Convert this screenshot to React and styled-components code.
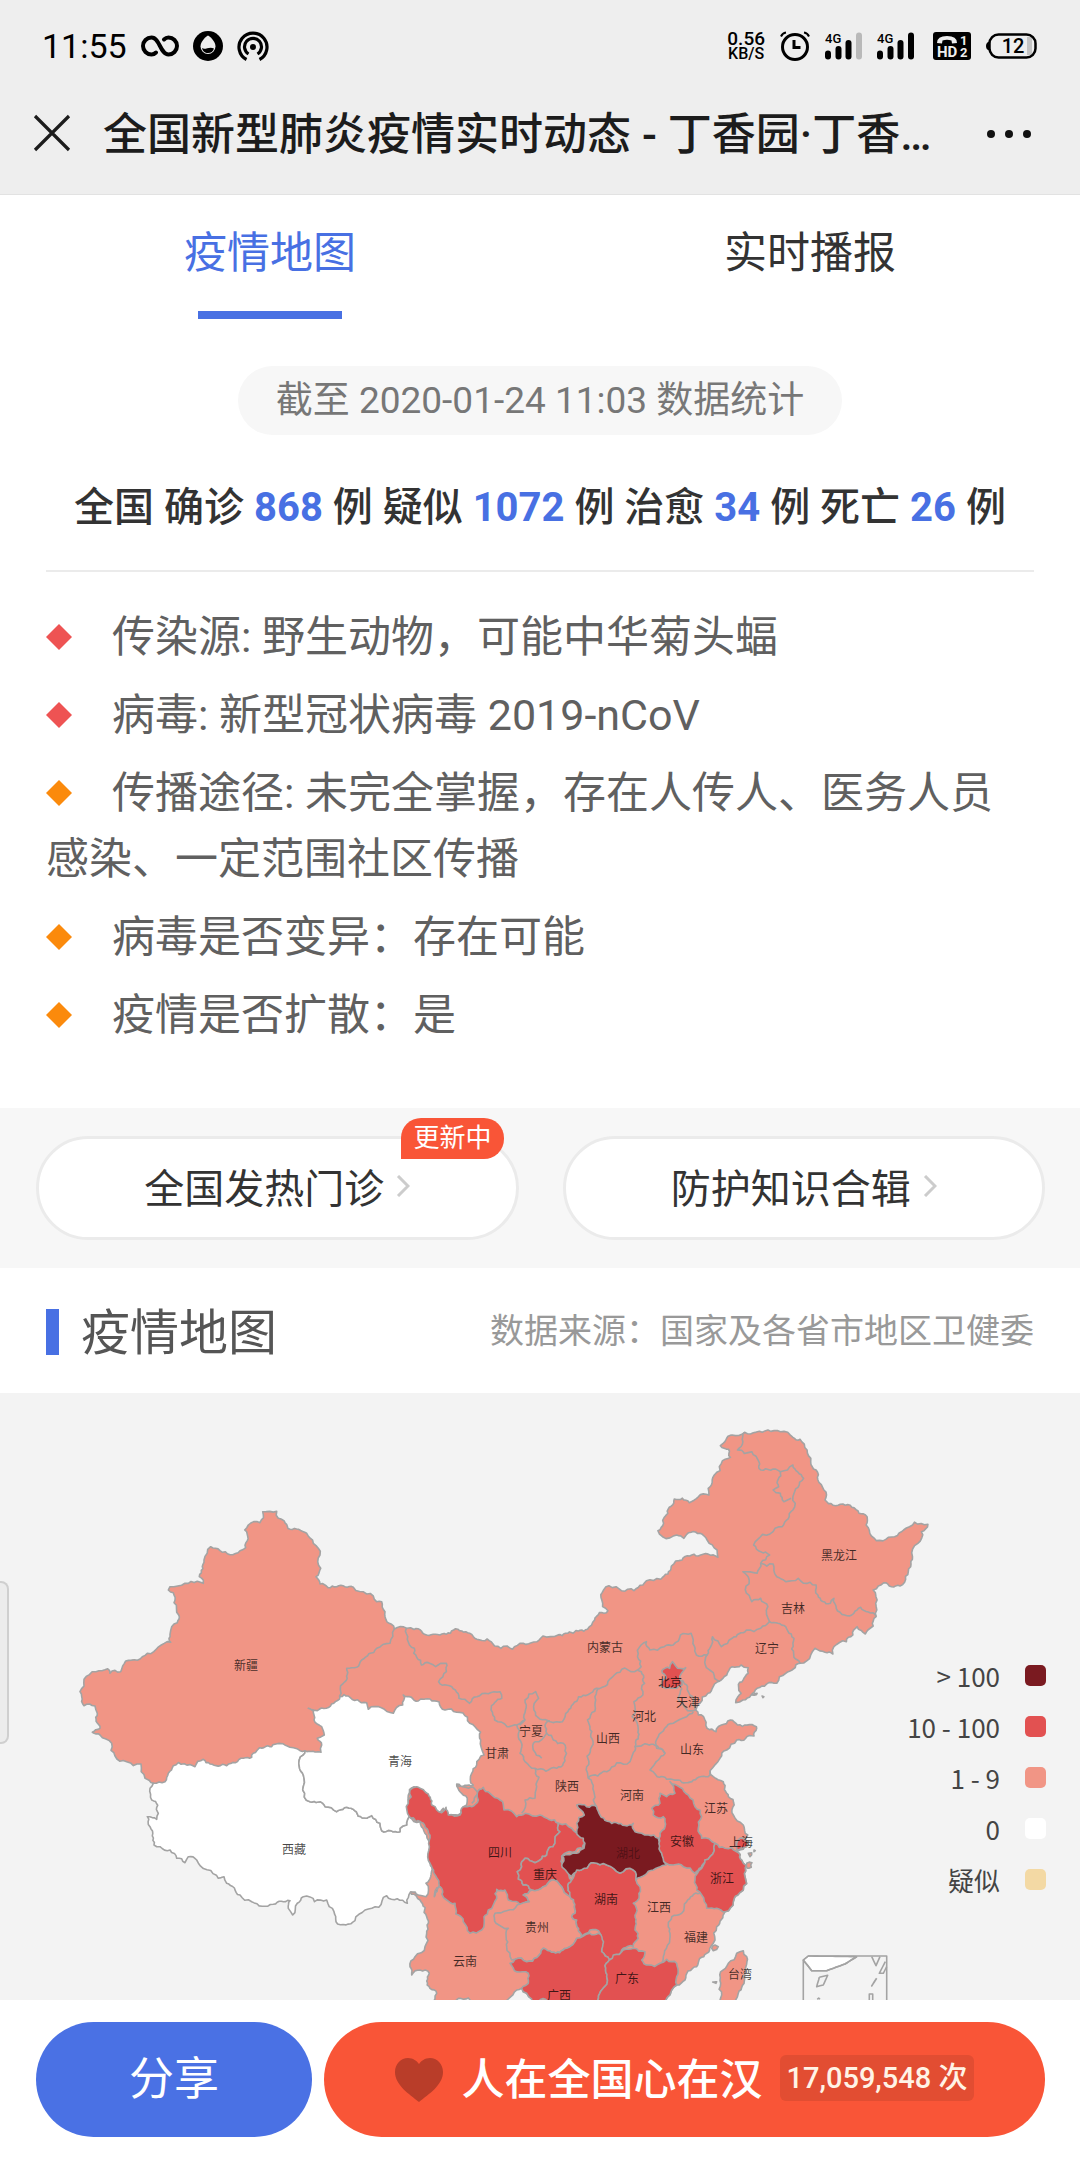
import React from "react";
import styled, { createGlobalStyle } from "styled-components";

const BLUE = "#4870e3";
const RED = "#f95537";
const SANS = `Roboto, "Noto Sans CJK SC", sans-serif`;

const GlobalStyle = createGlobalStyle`
  * { box-sizing: border-box; }
  body { margin: 0; background: #fff; font-family: ${SANS}; color: #333; }
  button { font: inherit; color: inherit; border: 0; padding: 0; background: none; cursor: pointer; }
  a { color: inherit; text-decoration: none; }
  h1, h2, p, ul { margin: 0; padding: 0; font-weight: 400; list-style: none; }
  svg { display: block; flex: none; }
`;

/* ---------- top bars ---------- */

const Page = styled.div`
  min-height: 100vh;
  display: flex;
  flex-direction: column;
`;

const Top = styled.header`
  background: #eee;
  border-bottom: 1px solid #e2e2e2;
`;

const StatusBar = styled.div`
  height: 92px;
  padding: 0 43px 0 42px;
  display: flex;
  align-items: center;
  justify-content: space-between;
  color: #000;
`;

const StatusGroup = styled.div`
  display: flex;
  align-items: center;
  gap: ${(p) => p.$gap}px;
`;

const Clock = styled.span`
  font-size: 34px;
  line-height: 40px;
`;

const Speed = styled.div`
  display: flex;
  flex-direction: column;
  align-items: center;
  font-weight: 500;
  font-size: 19px;
  line-height: 16px;
`;

const SmallUnit = styled.span`
  font-size: 16px;
  line-height: 14px;
`;

const TitleBar = styled.div`
  height: 102px;
  padding: 0 48px 20px 32px;
  display: flex;
  align-items: center;
`;

const PageTitle = styled.h1`
  flex: 1;
  margin-left: 31px;
  padding-top: 4px;
  font-size: 44px;
  line-height: 60px;
  font-weight: 500;
  color: #1c1c1c;
  white-space: nowrap;
`;

const Tabs = styled.nav`
  display: flex;
  padding-top: 28px;
`;

const Tab = styled.button`
  flex: 1;
  display: flex;
  flex-direction: column;
  align-items: center;
  gap: 28px;
  font-size: 43px;
  line-height: 60px;
  color: ${(p) => (p.$active ? BLUE : "#333")};

  &::after {
    content: "";
    width: 144px;
    height: 8px;
    background: ${(p) => (p.$active ? BLUE : "transparent")};
  }
`;

/* ---------- numbers and facts ---------- */

const Overview = styled.section`
  padding: 47px 46px 60px;
  display: flex;
  flex-direction: column;
`;

const Stamp = styled.p`
  align-self: center;
  padding: 0 38px;
  border-radius: 35px;
  background: #f7f7f7;
  color: #777;
  font-size: 37px;
  line-height: 69px;
`;

const Totals = styled.p`
  padding: 41px 0 30px;
  border-bottom: 2px solid #ebebeb;
  font-size: 40px;
  line-height: 64px;
  font-weight: 500;
  text-align: center;
  white-space: nowrap;
`;

const Count = styled.strong`
  font-weight: 700;
  color: ${BLUE};
`;

const Facts = styled.ul`
  margin-top: 32px;
  display: flex;
  flex-direction: column;
  gap: 12px;
`;

const Fact = styled.li`
  font-size: 43px;
  line-height: 66px;
  color: #606060;

  &::before {
    content: "";
    display: inline-block;
    width: 26px;
    height: 26px;
    margin-right: 40px;
    vertical-align: 2px;
    background: ${(p) => p.$color};
    clip-path: polygon(50% 0, 100% 50%, 50% 100%, 0 50%);
  }
`;

const Links = styled.nav`
  display: grid;
  grid-template-columns: 1fr 1fr;
  gap: 44px;
  padding: 28px 35px 28px 36px;
  background: #f7f7f7;
`;

const PillLink = styled.a`
  position: relative;
  display: flex;
  align-items: center;
  justify-content: center;
  gap: 12px;
  height: 104px;
  padding-bottom: 4px;
  border: 3px solid #ebebeb;
  border-radius: 52px;
  background: #fff;
  font-size: 40px;
`;

const Badge = styled.span`
  position: absolute;
  top: -21px;
  right: 12px;
  padding: 0 12px;
  border-radius: 20px 20px 20px 0;
  background: ${RED};
  color: #fff;
  font-size: 26px;
  line-height: 41px;
`;

const SectionHead = styled.div`
  display: flex;
  align-items: center;
  justify-content: space-between;
  height: 125px;
  padding: 0 46px 4px;
`;

const SectionTitle = styled.h2`
  display: flex;
  align-items: center;
  gap: 22px;
  font-size: 49px;
  color: #555;

  &::before {
    content: "";
    width: 13px;
    height: 46px;
    margin-top: 6px;
    background: ${BLUE};
  }
`;

const Source = styled.p`
  font-size: 34px;
  color: #999;
`;

/* ---------- map ---------- */

const MapPanel = styled.section`
  position: relative;
  background: #f3f3f3;
`;

const MapSvg = styled.svg`
  width: 100%;
  height: auto;

  path {
    stroke: #a3a3a3;
    stroke-width: 1.6;
    stroke-linejoin: round;
  }

  text {
    font-family: "Noto Sans CJK SC", sans-serif;
    font-size: 12px;
    fill: #000;
    text-anchor: middle;
  }
`;

const Drawer = styled.button`
  position: absolute;
  left: 0;
  top: 188px;
  width: 9px;
  height: 163px;
  border: 2px solid #cfcfcf;
  border-left: 0;
  border-radius: 0 8px 8px 0;
  background: #ececec;
`;

const Legend = styled.ul`
  position: absolute;
  right: 34px;
  top: 257px;
  font-family: "Noto Sans CJK SC", sans-serif;
  font-size: 26px;
  line-height: 51px;
  color: #444;
`;

const LegendRow = styled.li`
  display: flex;
  align-items: center;
  justify-content: flex-end;
  gap: 25px;

  &::after {
    content: "";
    width: 21px;
    height: 21px;
    border-radius: 5px;
    background: ${(p) => p.$color};
  }
`;

/* ---------- bottom actions ---------- */

const Actions = styled.footer`
  position: sticky;
  bottom: 0;
  display: flex;
  gap: 12px;
  margin-top: auto;
  padding: 22px 35px 23px 36px;
  background: #fff;
`;

const Action = styled.button`
  flex: ${(p) => p.$grow};
  display: flex;
  align-items: center;
  justify-content: center;
  gap: 18px;
  height: 115px;
  border-radius: 58px;
  background: ${(p) => p.$color};
  color: #fff;
  font-size: ${(p) => p.$size}px;
  font-weight: ${(p) => p.$weight};
`;

const ActionLabel = styled.span`
  padding-bottom: 8px;
`;

const Tally = styled.span`
  margin-bottom: 4px;
  padding: 0 6px;
  border-radius: 6px;
  background: #e24d32;
  color: #fff3e6;
  font-size: 29px;
  line-height: 46px;
`;

/* ---------- map geometry ---------- */

// The provinces are traced on four sheets; each sheet has its own origin and scale.
const sheet = (ox, oy, sx, sy) => (s) =>
  s.trim().split(/\s+/).map((pair) => {
    const [x, y] = pair.split(",").map(Number);
    return [ox + x / sx, oy + y / sy];
  });
const W = sheet(60, 87, 3, 3);
const N = sheet(400, 7, 2.8, 3);
const S = sheet(400, 307, 3, 3);
const E = sheet(700, 247, 3, 3);

// Splits a border segment into small irregular steps. The result depends only on
// the two end points, so neighbours that share a segment get the same line.
const noise = (x, y) => {
  const v = Math.sin(x * 12.9898 + y * 78.233) * 43758.5453;
  return v - Math.floor(v) - 0.5;
};
const rough = (a, b, k) => {
  const dx = b[0] - a[0];
  const dy = b[1] - a[1];
  if (Math.hypot(dx, dy) < 4) return [b];
  const sign = dx > 0 || (dx === 0 && dy > 0) ? 1 : -1;
  const mx = (a[0] + b[0]) / 2;
  const my = (a[1] + b[1]) / 2;
  const n = noise(Math.round(mx * 8), Math.round(my * 8)) * k * sign;
  const m = [mx - dy * n, my + dx * n];
  return [...rough(a, m, k), ...rough(m, b, k)];
};
const line = (pts, k = 0.42) => {
  const out = [pts[0]];
  for (let i = 1; i < pts.length; i += 1) out.push(...rough(pts[i - 1], pts[i], k));
  return "M" + out.map((p) => p[0].toFixed(1) + "," + p[1].toFixed(1)).join("L");
};
const area = (pts, k) => line([...pts, pts[0]], k) + "Z";

const LEVEL = { over: "#7a1a20", high: "#e25151", low: "#f19585", none: "#fff", suspect: "#f3d9a4" };

const COUNTRY = [
  ...W(`60,635 72,598 108,575 143,566 150,580 182,575 197,543 232,541 262,520 332,487 335,440 352,428 356,405
    342,368 340,338 325,330 330,320 375,310 412,304 430,310 430,300 418,290 432,240 452,200 480,212 540,212
    557,203 554,150 565,135 600,128 608,95 650,94 655,115 690,148 740,160 760,190 780,225 782,265 768,290
    780,312 830,320 880,322 920,342 950,365 965,365 975,395 1003,447 1040,445`),
  ...N(`60,693 150,690 195,700 215,718 265,738 300,738 315,748 345,730 400,708 485,700 525,688 545,660 582,632
    565,600 570,570 585,557 605,560 620,572 655,572 680,555 690,542 730,538 750,522 760,498 790,480 835,468
    890,472 888,450 860,420 840,400 815,397 795,415 775,405 735,410 722,392 738,370 750,340 768,297 810,308
    865,285 863,265 872,255 880,225 900,190 925,172 920,148 897,137 930,105 965,97 1030,90 1065,95 1100,112
    1120,118 1140,150 1150,185 1165,210 1170,240 1187,270 1190,300 1240,312 1265,322 1285,340 1308,350
    1305,375 1320,408 1385,410 1410,390 1478,373 1460,395 1450,430 1435,470 1430,500 1400,558 1355,548
    1325,570 1332,610 1333,650 1325,678 1310,690 1303,702 1280,680 1268,705 1250,725 1215,740 1212,762
    1190,757 1162,745 1150,765 1120,790 1080,820 1055,850 1000,865 960,900 940,908 945,892 955,880 948,860
    975,820 975,803 955,795 930,800 915,825 890,845 862,880 840,910 828,930 850,950 860,985 885,995 900,975
    925,960 945,975 998,980`),
  ...S(`1070,85 1062,108 1010,120 980,150 960,175 930,212 940,230 970,245 985,290 1000,345 1030,375 1043,405
    1040,430 1030,448 1010,455 1040,495 1035,530 1030,570 1000,605 975,635 950,680 945,720 920,760 890,800
    855,840 830,855 815,870 800,895 795,920 385,920 395,897 380,880 365,865 350,870 325,897 310,920 100,920
    105,897 110,880 90,865 88,820 60,810 35,825 30,800 45,770 75,740 80,700 80,650 60,600`),
  ...W(`280,910 255,895 243,852 200,845 165,828 155,790 120,765 97,757 120,745 112,700 105,678 72,677 65,650`),
];

const REGIONS = [
  ["none", W(`280,910 315,905 325,880 340,857 405,860 430,838 450,852 500,857 550,835 575,832 590,812 635,800
    680,797 720,812 735,812 730,825 718,860 730,885 728,930 750,965 795,980 830,995 920,1015 935,1007 960,1030
    965,1052 1020,1055 1020,1045 1040,1035 1048,1010 1080,1025 1105,1080 1112,1190 1098,1210 1098,1250
    1075,1245 1052,1235 1042,1270 980,1247 915,1290 885,1322 828,1325 822,1295 800,1260 730,1250 712,1270
    698,1305 690,1262 640,1273 575,1265 540,1245 500,1210 492,1190 475,1195 410,1140 385,1130 375,1148
    350,1135 300,1100 282,1095 270,1040 262,1010 290,1018 295,1000 275,960 270,925`)],
  ["none", W(`745,685 840,650 865,648 920,668 925,688 1000,700 1028,675 1030,645 1075,663 1110,657 1155,690
    1190,697 1245,740 1262,780 1272,825 1250,855 1235,880 1240,915 1190,912 1200,935 1222,955 1220,975
    1205,990 1195,1005 1160,1005 1150,985 1140,998 1110,975 1085,930 1062,920 1045,945 1050,975 1048,1010
    1040,1035 1020,1045 1020,1055 965,1052 960,1030 935,1007 920,1015 830,995 795,980 750,965 728,930
    730,885 718,860 730,825 735,812 783,817 785,795 772,775 793,765 785,740 762,720 760,690`)],
  ["high", S(`28,350 25,310 30,270 50,260 75,275 95,315 110,330 125,338 138,322 145,345 180,345 190,320 215,320
    235,300 232,280 250,262 270,280 300,300 312,330 350,350 375,340 420,345 475,370 480,395 465,430 440,465
    420,480 405,488 375,475 365,500 352,515 370,555 395,570 370,585 388,605 370,612 325,600 315,570 290,568
    290,595 265,630 252,650 245,690 210,700 190,665 165,610 140,600 120,560 103,590 95,500 88,420 70,370`)],
  ["high", S(`475,370 515,385 540,400 553,430 550,448 485,468 490,500 515,540 510,590 490,570 480,555 455,540
    430,560 395,570 370,555 352,515 365,500 375,475 405,488 420,480 440,465 465,430 480,395`)],
  ["low", S(`285,640 320,632 388,605 370,585 395,570 430,560 455,540 480,555 490,570 510,590 525,640 515,650
    530,660 545,710 530,715 500,745 455,757 430,745 380,785 345,778 335,780 320,740 325,685 288,670`)],
  ["high", S(`515,540 530,510 560,505 580,488 620,495 660,520 700,510 708,540 720,560 700,610 708,640 705,690
    715,715 700,740 670,745 650,765 628,780 605,755 600,700 570,690 545,710 530,660 515,650 525,640 510,590`)],
  ["over", S(`530,315 590,320 600,345 650,368 700,370 705,395 745,405 775,415 780,432 790,440 785,460 798,495
    760,510 735,525 708,540 700,510 660,520 620,495 580,488 560,505 530,510 515,530 500,515 485,495 488,468
    530,460 552,445 550,415 530,395 530,370 553,345`)],
  ["high", S(`330,790 345,778 380,785 430,745 455,757 500,745 530,715 570,700 595,700 605,755 628,780 620,830
    605,870 600,920 385,920 395,897 380,880 365,865 385,850 385,820`)],
  ["high", S(`628,780 640,765 670,750 700,745 735,755 725,780 745,795 780,790 800,778 830,790 830,855 815,870
    800,895 795,920 600,920 605,870 620,830`)],
  ["high", S(`810,245 840,262 865,285 885,320 905,350 895,385 905,415 945,430 930,470 915,480 885,520 850,500
    820,495 798,490 785,460 780,400 795,380 790,350 760,345 755,325 780,310 780,280 800,290 825,280`)],
  ["high", S(`945,430 975,445 1010,455 1040,495 1035,530 1030,570 1000,605 975,635 950,625 920,625 905,585
    890,570 885,540 905,505 915,480 930,470`)],
  ["high", S(`1010,430 1020,415 1043,425 1040,440 1010,450`)],
  ["high", N(`763,785 772,798 800,803 788,820 790,855 760,865 728,858 745,835 733,812 755,805`)],
  ["low", S(`962,920 962,850 985,790 1010,760 1030,752 1040,770 1030,830 1015,880 1000,920`)],
];

const BORDERS = [
  W(`1003,447 990,490 950,505 905,540 890,562 860,565 850,610 838,650`),
  [...N(`18,685 40,745 60,795 100,800 130,790 130,815 108,845 155,870 165,895 195,910 215,890 280,875 285,895
    255,930 265,960 300,980`), ...S(`350,75 355,110 360,160 375,185 405,205 470,205 490,190 490,130 460,120
    440,100 405,125 400,150 425,175`)],
  N(`335,975 350,960 350,900 380,875 388,895 375,930 420,965 455,965 470,935 500,890 550,865 600,825 665,810`),
  S(`350,75 375,60`),
  S(`440,100 435,75 450,62`),
  S(`405,205 410,260 405,295 375,300 365,340`),
  [...N(`555,865 548,900 525,960`), ...S(`570,80 575,140 560,200 565,235 580,300 590,320`)],
  S(`565,235 620,215 690,185 705,140 795,160`),
  [...N(`665,810 685,850 680,885 655,905 650,950`), ...S(`715,90 705,140`)],
  N(`665,810 675,800 665,770 675,735 690,725 700,750 740,740 765,735 785,705 815,700 825,740 830,765 860,765
    870,740 875,710 900,740 930,715 970,690 1010,685 1035,665`),
  N(`860,765 855,795 895,845`),
  N(`1035,665 1030,620 1010,595 985,605 975,530 960,515 1000,520 1010,490`),
  N(`1035,665 1080,680 1100,730 1120,790`),
  N(`965,97 960,125 945,150 985,155 1005,185 1010,210 1065,215 1100,195 1130,235 1100,290 1100,330 1070,380
    1050,385 990,435 1010,455 1035,465 1010,490 1045,492 1055,530 1080,545 1115,535 1130,550 1165,555 1170,585
    1205,610 1215,595 1245,645 1290,622 1333,650`),
  N(`1065,215 1060,260 1045,270 1065,280 1075,305 1095,295`),
  N(`790,840 805,860 820,890 828,930 800,925 778,895 790,865`),
  S(`880,35 860,50 820,70 775,110 770,145 795,160 775,180 750,210 790,230 835,240 880,240 930,225 930,212`),
  S(`885,540 900,580 860,605 845,640 815,650 810,700 790,770 785,790`),
  S(`165,250 220,262 235,280 215,310`),
];

const INSET = [
  E(`560,1120 560,948 325,948 310,960 310,1120`),
  E(`470,950 435,972 380,992 335,992 310,960`),
  E(`515,950 528,977 540,950`),
  E(`556,965 538,1000 550,1000 560,980`),
  E(`358,1012 383,1006 370,1035 350,1040 358,1012`),
  E(`530,1015 515,1038 528,1017`),
  E(`508,1085 508,1062 518,1062 518,1085`),
  E(`352,1078 356,1074 360,1078`),
];

const ISLETS = [
  S(`1045,460 1055,458 1050,470`),
  S(`1040,490 1056,488 1054,502 1042,505`),
  S(`935,745 945,735 955,740 940,752`),
  S(`938,846 950,845 948,850`),
  N(`985,885 1000,880 998,884`),
  N(`1014,888 1019,890 1016,893`),
  S(`1062,450 1066,452 1062,455`),
];

const LABELS = [
  ["新疆", 246, 273], ["西藏", 294, 457], ["青海", 400, 369], ["甘肃", 497, 361], ["四川", 500, 460],
  ["云南", 465, 569], ["贵州", 537, 535], ["重庆", 545, 482], ["宁夏", 531, 339], ["陕西", 567, 394],
  ["山西", 608, 346], ["河南", 632, 403], ["河北", 644, 324], ["北京", 670, 290], ["天津", 688, 310],
  ["内蒙古", 605, 255], ["黑龙江", 839, 163], ["吉林", 793, 216], ["辽宁", 767, 256], ["山东", 692, 357],
  ["江苏", 716, 416], ["上海", 741, 450], ["安徽", 682, 449], ["浙江", 722, 486], ["湖北", 628, 461, 0.35],
  ["湖南", 606, 507], ["江西", 659, 515], ["福建", 696, 545], ["广东", 627, 586], ["广西", 559, 603],
  ["台湾", 740, 582],
];

const ChinaMap = () => (
  <MapSvg viewBox="0 0 1080 607" role="img" aria-label="疫情地图">
    <path d={area(COUNTRY)} fill={LEVEL.low} />
    {BORDERS.map((pts, i) => (
      <path key={i} d={line(pts)} fill="none" />
    ))}
    {REGIONS.map(([level, pts], i) => (
      <path key={i} d={area(pts)} fill={LEVEL[level]} />
    ))}
    {ISLETS.map((pts, i) => (
      <path key={i} d={area(pts)} fill={LEVEL.low} />
    ))}
    <path d={area(E(`310,960 325,948 470,950 435,972 380,992 335,992`), 0)} fill="#fff" />
    {INSET.map((pts, i) => (
      <path key={i} d={line(pts, 0)} fill="none" />
    ))}
    {LABELS.map(([name, x, y, opacity = 0.72]) => (
      <text key={name} x={x} y={y + 4} fillOpacity={opacity}>{name}</text>
    ))}
  </MapSvg>
);

/* ---------- icons ---------- */

const Infinity8 = () => (
  <svg width="38" height="22" viewBox="0 0 38 22" fill="none" stroke="#000" strokeWidth="4" strokeLinecap="round">
    <path d="M15 17.5C13.500 19 12 19.500 10.500 19.500A8.500 8.500 0 0 1 10.500 2.500C19 2.500 19 19.500 27.500 19.500A8.500 8.500 0 0 0 27.500 2.500C26 2.500 24.500 3 23 4.500" />
  </svg>
);

const Drop = () => (
  <svg width="30" height="30" viewBox="0 0 30 30">
    <circle cx="15" cy="15" r="15" />
    <path d="M15 4.500C18 6 22.500 11 22.500 15.500A7.500 7.500 0 0 1 7.500 15.500C7.500 11 12 6 15 4.500Z" fill="#eee" />
    <path d="M9 17C12 19.500 16 15 21 17.500C20 20.500 18 22 15 22C12 22 9.500 20 9 17Z" />
  </svg>
);

const Hotspot = () => (
  <svg width="32" height="30" viewBox="0 0 32 30" fill="none" stroke="#000" strokeWidth="3.200">
    <path d="M9.500 28.500A14 14 0 1 1 22.500 28.500" />
    <path d="M11.500 23A8.500 8.500 0 1 1 20.500 23" />
    <circle cx="16" cy="16" r="3" fill="#000" stroke="none" />
  </svg>
);

const Alarm = () => (
  <svg width="30" height="30" viewBox="0 0 30 30" fill="none" stroke="#000" strokeWidth="3">
    <circle cx="15" cy="16" r="12.500" />
    <path d="M14 9V16.500H20.500" />
    <path d="M1 5.500Q2.500 2 6 1.500M29 5.500Q27.500 2 24 1.500" strokeWidth="2" />
  </svg>
);

const Signal = ({ weak }) => (
  <svg width="37" height="30" viewBox="0 0 37 30" strokeWidth="6" strokeLinecap="round">
    <text x="0" y="12" fontSize="13" fontWeight="500" fontFamily="Roboto, sans-serif">4G</text>
    <path d="M3 22.500V25.500" stroke="#000" />
    <path d="M13.500 18V25.500" stroke="#000" />
    <path d="M23.500 12V25.500" stroke="#000" />
    <path d="M34 4.500V25.500" stroke={weak ? "#b9b9b9" : "#000"} />
  </svg>
);

const HdCall = () => (
  <svg width="38" height="30" viewBox="0 0 38 30" fontFamily="Roboto, sans-serif" fontWeight="700" fill="#eee">
    <rect y="1" width="38" height="28" rx="3" fill="#000" />
    <path d="M4 12Q4 5 14 5T24 12L19 12.500L18.500 9.500Q14 8 9.500 9.500L9 12.500Z" />
    <text x="4" y="26" fontSize="15">HD</text>
    <text x="27" y="13.500" fontSize="13">1</text>
    <text x="27" y="26" fontSize="13">2</text>
  </svg>
);

const Battery = () => (
  <svg width="51" height="26" viewBox="0 0 51 26">
    <path d="M3 8.500Q0 9.500 0 13T3 17.500Z" />
    <rect x="41" y="4" width="5" height="18" fill="#c4c4c4" />
    <rect x="3.500" y="1.500" width="46" height="23" rx="9" fill="none" stroke="#000" strokeWidth="2.500" />
    <text x="27" y="20" fontSize="20" fontWeight="500" fontFamily="Roboto, sans-serif" textAnchor="middle">12</text>
  </svg>
);

const Close = () => (
  <svg width="40" height="40" viewBox="0 0 40 40" stroke="#1c1c1c" strokeWidth="3.200">
    <path d="M3 3L37 37M37 3L3 37" />
  </svg>
);

const More = () => (
  <svg width="46" height="10" viewBox="0 0 46 10" fill="#111">
    <circle cx="5" cy="6" r="4" />
    <circle cx="23" cy="6" r="4" />
    <circle cx="41" cy="6" r="4" />
  </svg>
);

const Chevron = () => (
  <svg width="14" height="22" viewBox="0 0 14 22" fill="none" stroke="#ccc" strokeWidth="3">
    <path d="M2 1L12 11L2 21" />
  </svg>
);

const Heart = () => (
  <svg width="48" height="44" viewBox="0 0 48 44" fill="#b93d29">
    <path d="M24 44C14 36 0 27 0 14C0 6 6 0 13 0C18 0 22 3 24 6C26 3 30 0 35 0C42 0 48 6 48 14C48 27 34 36 24 44Z" />
  </svg>
);

/* ---------- content ---------- */

const FACTS = [
  ["#ee5353", "传染源: 野生动物，可能中华菊头蝠"],
  ["#ee5353", "病毒: 新型冠状病毒 2019-nCoV"],
  ["#fb8a0c", "传播途径: 未完全掌握，存在人传人、医务人员感染、一定范围社区传播"],
  ["#fb8a0c", "病毒是否变异：存在可能"],
  ["#fb8a0c", "疫情是否扩散：是"],
];

const LEGEND = [
  ["over", "> 100"],
  ["high", "10 - 100"],
  ["low", "1 - 9"],
  ["none", "0"],
  ["suspect", "疑似"],
];

export default function App() {
  return (
    <Page>
      <GlobalStyle />
      <Top>
        <StatusBar>
          <StatusGroup $gap={14}>
            <Clock>11:55</Clock>
            <Infinity8 />
            <Drop />
            <Hotspot />
          </StatusGroup>
          <StatusGroup $gap={19}>
            <StatusGroup $gap={15}>
              <Speed>
                0.56
                <SmallUnit>KB/S</SmallUnit>
              </Speed>
              <Alarm />
              <Signal weak />
              <Signal />
            </StatusGroup>
            <StatusGroup $gap={15}>
              <HdCall />
              <Battery />
            </StatusGroup>
          </StatusGroup>
        </StatusBar>
        <TitleBar>
          <button aria-label="关闭"><Close /></button>
          <PageTitle>全国新型肺炎疫情实时动态 - 丁香园·丁香…</PageTitle>
          <button aria-label="更多"><More /></button>
        </TitleBar>
      </Top>

      <Tabs>
        <Tab $active>疫情地图</Tab>
        <Tab>实时播报</Tab>
      </Tabs>

      <Overview>
        <Stamp>截至 2020-01-24 11:03 数据统计</Stamp>
        <Totals>
          全国 确诊 <Count>868</Count> 例 疑似 <Count>1072</Count> 例 治愈 <Count>34</Count> 例 死亡{" "}
          <Count>26</Count> 例
        </Totals>
        <Facts>
          {FACTS.map(([color, text]) => (
            <Fact key={text} $color={color}>{text}</Fact>
          ))}
        </Facts>
      </Overview>

      <Links>
        <PillLink href="#clinics">
          全国发热门诊
          <Chevron />
          <Badge>更新中</Badge>
        </PillLink>
        <PillLink href="#guides">
          防护知识合辑
          <Chevron />
        </PillLink>
      </Links>

      <SectionHead>
        <SectionTitle>疫情地图</SectionTitle>
        <Source>数据来源：国家及各省市地区卫健委</Source>
      </SectionHead>

      <MapPanel>
        <ChinaMap />
        <Drawer aria-label="展开" />
        <Legend>
          {LEGEND.map(([level, text]) => (
            <LegendRow key={level} $color={LEVEL[level]}>{text}</LegendRow>
          ))}
        </Legend>
      </MapPanel>

      <Actions>
        <Action $grow="276 1 0" $color="#4a71e4" $size={45} $weight={400}>
          <ActionLabel>分享</ActionLabel>
        </Action>
        <Action $grow="721 1 0" $color={RED} $size={43} $weight={500}>
          <Heart />
          <ActionLabel>人在全国心在汉</ActionLabel>
          <Tally>17,059,548 次</Tally>
        </Action>
      </Actions>
    </Page>
  );
}
